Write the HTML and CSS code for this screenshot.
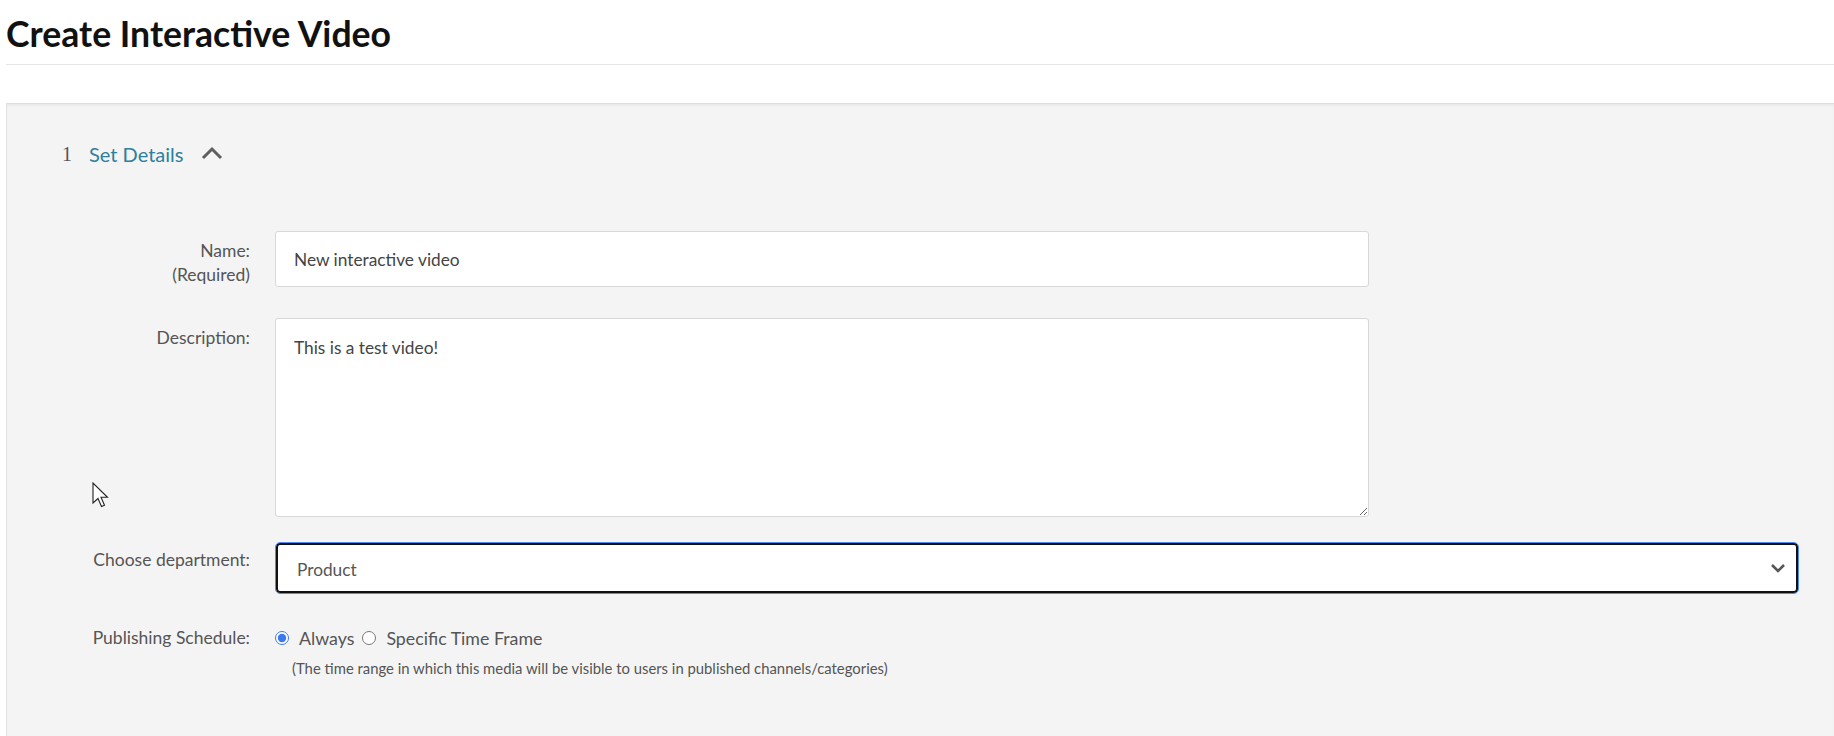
FILE: index.html
```html
<!DOCTYPE html>
<html lang="en">
<head>
<meta charset="utf-8">
<title>Create Interactive Video</title>
<link rel="stylesheet" href="styles.css">
</head>
<body>
<div class="page">
  <header class="page-header">
    <h1 class="page-title">Create Interactive Video</h1>
  </header>

  <section class="panel">
    <div class="step-header">
      <span class="step-num">1</span>
      <span class="step-title">Set Details</span>
      <svg class="step-chevron" width="22" height="14" viewBox="0 0 22 14" aria-hidden="true">
        <path d="M2 12 L11 3 L20 12" fill="none" stroke="#5f5f5f" stroke-width="3"/>
      </svg>
    </div>

    <form class="form">
      <div class="row row-name">
        <label class="label" for="name">Name:<br>(Required)</label>
        <div class="control">
          <input id="name" class="input" type="text" value="New interactive video">
        </div>
      </div>

      <div class="row row-desc">
        <label class="label" for="desc">Description:</label>
        <div class="control">
          <textarea id="desc" class="textarea">This is a test video!</textarea>
        </div>
      </div>

      <div class="row row-dept">
        <label class="label label-dept" for="dept">Choose department:</label>
        <div class="control control-wide">
          <div class="select">
            <span class="select-value">Product</span>
            <svg class="select-chevron" width="16" height="10" viewBox="0 0 16 10" aria-hidden="true">
              <path d="M2 2 L8 8 L14 2" fill="none" stroke="#555" stroke-width="2.6"/>
            </svg>
          </div>
        </div>
      </div>

      <div class="row row-pub">
        <span class="label label-pub">Publishing Schedule:</span>
        <div class="control">
          <div class="radios">
            <label class="radio"><input type="radio" name="pub" checked> <span>Always</span></label>
            <label class="radio"><input type="radio" name="pub"> <span>Specific Time Frame</span></label>
          </div>
          <p class="help">(The time range in which this media will be visible to users in published channels/categories)</p>
        </div>
      </div>
    </form>
  </section>
</div>

<svg class="cursor" width="20" height="28" viewBox="0 0 20 28" aria-hidden="true">
  <path d="M1 1 L1 21 L6 16.5 L9.5 24.5 L12.5 23.2 L9 15.3 L15.5 15.3 Z" fill="#fff" stroke="#222" stroke-width="1.1" stroke-linejoin="miter"/>
</svg>
</body>
</html>
```

FILE: styles.css
```css
html, body {
  margin: 0;
  padding: 0;
  background: #fff;
}

body {
  font-family: Lato, "Open Sans", "Liberation Sans", sans-serif;
  color: #555;
  overflow: hidden;
  height: 736px;
}

.page {
  padding-left: 6px;
}

.page-header {
  border-bottom: 1px solid #e6e6e6;
  padding-top: 15px;
  padding-bottom: 11px;
}

.page-title {
  margin: 0;
  font-size: 35.6px;
  font-weight: 700;
  line-height: 38px;
  color: #111;
  padding-left: 0;
}

.panel {
  margin-top: 38px;
  background: #f4f4f4;
  border-top: 1px solid #dedede;
  border-left: 1px solid #e2e2e2;
  box-shadow: inset 0 2px 2px rgba(0, 0, 0, 0.04);
  padding: 34px 0 60px 0;
  min-height: 600px;
}

.step-header {
  display: flex;
  align-items: center;
  height: 32px;
  padding-left: 55px;
}

.step-num {
  font-family: "Liberation Serif", "DejaVu Serif", serif;
  font-size: 20px;
  color: #555;
  width: 27px;
}

.step-title {
  font-size: 20px;
  color: #2e7f9d;
}

.step-chevron {
  margin-left: 18px;
  margin-top: -2px;
}

.form {
  margin-top: 61px;
  display: flex;
  flex-direction: column;
}

.row {
  display: flex;
  align-items: flex-start;
}

.label {
  width: 243px;
  flex: none;
  text-align: right;
  font-size: 17.5px;
  line-height: 24px;
  color: #555;
  padding-top: 8px;
}

.control {
  margin-left: 25px;
  width: 1094px;
}

.control-wide {
  width: 1524px;
}

.row-name {
  margin-bottom: 31px;
}

.row-desc {
  margin-bottom: 25px;
}

.row-dept {
  margin-bottom: 32px;
}

.input,
.textarea {
  box-sizing: border-box;
  display: block;
  width: 100%;
  border: 1px solid #d8d8d8;
  border-radius: 3px;
  background: #fff;
  font-family: Lato, "Open Sans", "Liberation Sans", sans-serif;
  font-size: 17.3px;
  color: #444;
  padding: 0 18px;
  margin: 0;
  outline: none;
}

.input {
  height: 56px;
}

.textarea {
  height: 199px;
  padding-top: 17px;
  line-height: 24px;
  resize: vertical;
}

.select {
  box-sizing: border-box;
  height: 52px;
  border: 1px solid #4f8cf5;
  border-radius: 5px;
  box-shadow: inset 0 0 0 2px #111;
  background: #fff;
  display: flex;
  align-items: center;
  justify-content: space-between;
  padding: 0 12px 0 21px;
}

.label-dept {
  padding-top: 6px;
}

.select-value {
  font-size: 17.3px;
  color: #555;
  padding-top: 2px;
}

.select-chevron {
  display: block;
}

.label-pub {
  padding-top: 0;
}

.radios {
  display: flex;
  align-items: center;
  height: 24px;
  font-size: 17.8px;
  color: #555;
}

.radio {
  display: flex;
  align-items: center;
}

.radio input {
  accent-color: #3b78f0;
  width: 14px;
  height: 14px;
  margin: 0 10px 0 0;
}

.radio span {
  margin-right: 8px;
}

.help {
  margin: 9px 0 0 17px;
  font-size: 14.85px;
  line-height: 18px;
  color: #555;
}

.cursor {
  position: absolute;
  left: 92px;
  top: 482px;
}
```
